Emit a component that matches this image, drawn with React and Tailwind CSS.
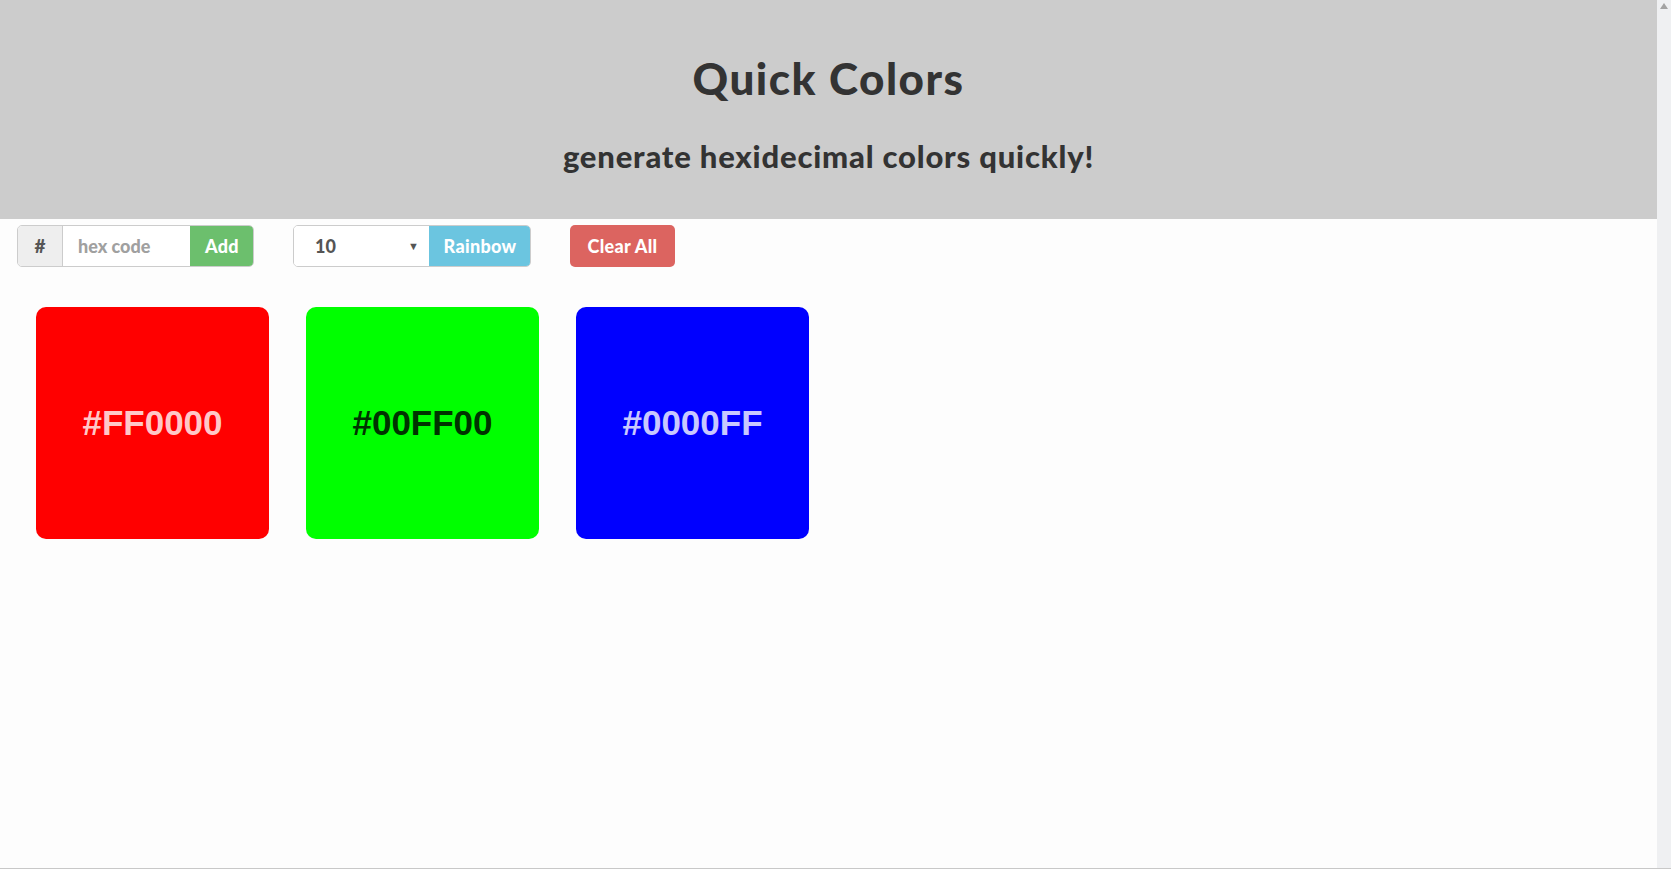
import React from "react";

const fred = { fontFamily: "Lato, 'Open Sans', sans-serif" };

function Card({ bg, fg, label }) {
  return (
    <div
      className={`flex h-[232px] w-[233px] items-center justify-center rounded-[10px] ${bg}`}
    >
      <span
        className={`text-[35px] font-bold ${fg}`}
        style={{ fontFamily: "'Liberation Sans', Arial, sans-serif" }}
      >
        {label}
      </span>
    </div>
  );
}

export default function App() {
  return (
    <div className="flex h-[869px] w-[1671px] overflow-hidden border-b border-[#c8c8c8] bg-[#fdfdfd]">
      <div className="flex min-w-0 flex-1 flex-col" style={fred}>
        <header className="flex h-[219px] flex-col items-center bg-[#cccccc] text-[#333333]">
          <h1 className="mt-[52px] text-[44px] font-black leading-[52px] tracking-[1.5px]">
            Quick Colors
          </h1>
          <h3 className="mt-[34px] text-[31px] font-black leading-[36px] tracking-[0.8px]">
            generate hexidecimal colors quickly!
          </h3>
        </header>

        <div className="mt-[6px] flex items-center gap-[39px] pl-[17px]">
          <div className="flex h-[42px] w-[237px] overflow-hidden rounded-[5px] border border-[#cccccc]">
            <div className="flex w-[45px] items-center justify-center border-r border-[#cccccc] bg-[#eeeeee] text-[19px] font-black text-[#555555]">
              #
            </div>
            <div className="flex w-[127px] items-center bg-white pl-[15px] text-[18px] font-black text-[#a0a0a0]">
              hex code
            </div>
            <button className="-my-px -mr-px flex flex-1 items-center justify-center bg-[#6cbf6d] text-[18px] font-black tracking-[0.3px] text-white">
              Add
            </button>
          </div>

          <div className="flex h-[42px] w-[238px] overflow-hidden rounded-[5px] border border-[#cccccc]">
            <div className="flex w-[135px] items-center justify-between bg-white pl-[21px] pr-[10px] text-[18px] font-black text-[#555555]">
              <span>10</span>
              <span className="text-[11px] text-[#555555]">▼</span>
            </div>
            <button className="-my-px -mr-px flex flex-1 items-center justify-center rounded-r-[5px] bg-[#6bc5e0] text-[18px] font-black tracking-[0.3px] text-white">
              Rainbow
            </button>
          </div>

          <button className="flex h-[42px] w-[105px] items-center justify-center rounded-[5px] bg-[#dc6460] text-[18px] font-black tracking-[0.3px] text-white">
            Clear All
          </button>
        </div>

        <div className="mt-[40px] flex gap-[37px] pl-[36px]">
          <Card bg="bg-[#ff0000]" fg="text-[#ffc8c8]" label="#FF0000" />
          <Card bg="bg-[#00ff00]" fg="text-[#003300]" label="#00FF00" />
          <Card bg="bg-[#0000ff]" fg="text-[#c8c8ff]" label="#0000FF" />
        </div>
      </div>

      <div className="relative w-[14px] shrink-0 bg-[#eff0f2]">
        <svg className="absolute left-[3px] top-[3px]" width="8" height="6" viewBox="0 0 8 6">
          <polygon points="4,0 8,6 0,6" fill="#a3a3a3" />
        </svg>
      </div>
    </div>
  );
}
